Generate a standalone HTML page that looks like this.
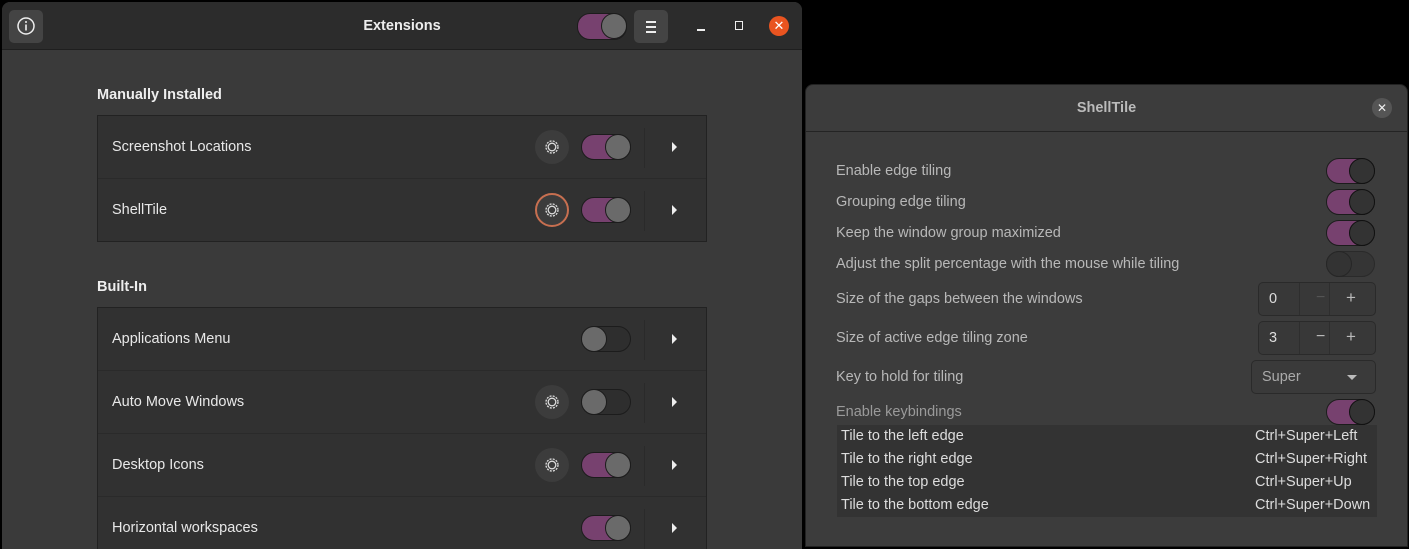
<!DOCTYPE html>
<html><head><meta charset="utf-8"><style>
*{box-sizing:border-box;margin:0;padding:0}
html{width:1409px;height:549px;overflow:hidden}
body{width:1409px;height:549px;background:#000;position:relative;overflow:hidden;font-family:"Liberation Sans",sans-serif;color:#eee;font-size:14px}
.a{position:absolute}
.win{left:2px;top:2px;width:800px;height:547px;background:#3a3a3a;border-radius:8px 8px 0 0;overflow:hidden}
.hdr{left:0;top:0;width:800px;height:48px;background:#2c2c2c;border-bottom:1px solid #1f1f1f}
.btn{background:#444;border-radius:5px}
.tg{width:50px;height:26px;border-radius:13px;border:1px solid #1c1c1c}
.tg.on{background:#77416f}
.tg.off{background:#2e2e2e}
.tg .k{position:absolute;top:0;width:24px;height:24px;border-radius:50%;background:#6a6a6a;border:1px solid #1c1c1c}
.tg.on .k{right:-1px;top:-1px;width:26px;height:26px}
.tg.off .k{left:-1px;top:-1px;width:26px;height:26px}
.list{left:97px;width:610px;background:#313131;border:1px solid #222;overflow:hidden}
.row{position:relative;height:63px;border-bottom:1px solid #2a2a2a}
.row:last-child{border-bottom:none}
.row .t{position:absolute;left:14px;top:23px;font-size:14.5px;color:#e8e8e8}
.row .sep{position:absolute;left:546px;top:12px;width:1px;height:40px;background:#2a2a2a}
.row .ar{position:absolute;left:574px;top:26px;width:0;height:0;border-left:5px solid #eee;border-top:5px solid transparent;border-bottom:5px solid transparent}
.gear{position:absolute;left:437px;top:14px;width:34px;height:34px;border-radius:50%;background:#3c3c3c;display:flex;align-items:center;justify-content:center}
.row .tg{position:absolute;left:483px;top:18px}
.sec{left:97px;font-weight:bold;font-size:14.5px;color:#eee}
.dlg{left:805px;top:84px;width:603px;height:463px;background:#3c3c3c;border-radius:8px 8px 0 0;border:1px solid #222}
.dh{left:0;top:0;width:601px;height:47px;border-bottom:1px solid #242424}
.lab{left:30px;font-size:14.5px;color:#b8b8b8}
.dlg .tg{left:520px;width:49px;height:26px;border-radius:13px}
.dlg .tg.on .k{right:-1px;top:-1px;width:26px;height:26px;background:#333;border:1px solid #111}
.dlg .tg.off .k{left:-1px;top:-1px;width:26px;height:26px;background:#333;border:1px solid #262626}
.dlg .tg.off{background:#353535;border-color:#2a2a2a}
.spin{left:452px;width:118px;height:34px;border:1px solid #2a2a2a;border-radius:5px;background:#383838}
.spin span{position:absolute;top:8px;font-size:14.5px}
.kb{left:31px;top:340px;width:540px;height:92px;background:#333}
.kb div{position:absolute;font-size:14.5px;color:#ddd}
</style></head><body>
<div class="a win">
 <div class="a hdr">
  <div class="a btn" style="left:7px;top:8px;width:34px;height:33px"></div>
  <svg class="a" style="left:13px;top:13px" width="22" height="22"><circle cx="11" cy="11" r="8" fill="none" stroke="#eee" stroke-width="1.5"/><rect x="10.2" y="9.5" width="1.6" height="6" fill="#eee"/><circle cx="11" cy="7" r="1" fill="#eee"/></svg>
  <div class="a" style="left:0;width:800px;top:16px;text-align:center;font-weight:bold;font-size:14.5px">Extensions</div>
  <div class="a tg on" style="left:575px;top:11px;width:50px;height:27px"><div class="k"></div></div>
  <div class="a btn" style="left:632px;top:8px;width:34px;height:33px"></div>
  <div class="a" style="left:644px;top:19px;width:10px;height:1.5px;background:#eee;box-shadow:0 5px 0 #eee,0 10px 0 #eee"></div>
  <div class="a" style="left:695px;top:27px;width:8px;height:1.5px;background:#eee"></div>
  <div class="a" style="left:733px;top:19px;width:8px;height:9px;border:1.5px solid #eee"></div>
  <div class="a" style="left:767px;top:14px;width:20px;height:20px;border-radius:50%;background:#e95420;color:#fff;font-size:13px;text-align:center;line-height:20px">✕</div>
 </div>
</div>
<div class="a sec" style="top:87px">Manually Installed</div>
<div class="a list" style="top:115px;height:127px">
 <div class="row"><div class="t">Screenshot Locations</div><div class="gear"><svg width="18" height="18" viewBox="0 0 18 18"><circle cx="9" cy="9" r="6" fill="none" stroke="#ddd" stroke-width="1.3" stroke-dasharray="2 1.2"/><circle cx="9" cy="9" r="3.8" fill="none" stroke="#ddd" stroke-width="1.3"/></svg></div><div class="tg on"><div class="k"></div></div><div class="sep"></div><div class="ar"></div></div>
 <div class="row"><div class="t">ShellTile</div><div class="gear" style="border:2px solid #c76f50"><svg width="18" height="18" viewBox="0 0 18 18"><circle cx="9" cy="9" r="6" fill="none" stroke="#ddd" stroke-width="1.3" stroke-dasharray="2 1.2"/><circle cx="9" cy="9" r="3.8" fill="none" stroke="#ddd" stroke-width="1.3"/></svg></div><div class="tg on"><div class="k"></div></div><div class="sep"></div><div class="ar"></div></div>
</div>
<div class="a sec" style="top:279px">Built-In</div>
<div class="a list" style="top:307px;height:242px;border-bottom:none">
 <div class="row"><div class="t">Applications Menu</div><div class="tg off"><div class="k"></div></div><div class="sep"></div><div class="ar"></div></div>
 <div class="row"><div class="t">Auto Move Windows</div><div class="gear"><svg width="18" height="18" viewBox="0 0 18 18"><circle cx="9" cy="9" r="6" fill="none" stroke="#ddd" stroke-width="1.3" stroke-dasharray="2 1.2"/><circle cx="9" cy="9" r="3.8" fill="none" stroke="#ddd" stroke-width="1.3"/></svg></div><div class="tg off"><div class="k"></div></div><div class="sep"></div><div class="ar"></div></div>
 <div class="row"><div class="t">Desktop Icons</div><div class="gear"><svg width="18" height="18" viewBox="0 0 18 18"><circle cx="9" cy="9" r="6" fill="none" stroke="#ddd" stroke-width="1.3" stroke-dasharray="2 1.2"/><circle cx="9" cy="9" r="3.8" fill="none" stroke="#ddd" stroke-width="1.3"/></svg></div><div class="tg on"><div class="k"></div></div><div class="sep"></div><div class="ar"></div></div>
 <div class="row"><div class="t">Horizontal workspaces</div><div class="tg on"><div class="k"></div></div><div class="sep"></div><div class="ar"></div></div>
</div>

<div class="a dlg">
 <div class="a dh"></div>
 <div class="a" style="left:0;width:601px;top:15px;text-align:center;font-weight:bold;font-size:14.5px;color:#bbb">ShellTile</div>
 <div class="a" style="left:566px;top:13px;width:20px;height:20px;border-radius:50%;background:#555;color:#eee;text-align:center;line-height:20px;font-size:12px">✕</div>
 <div class="a lab" style="top:78px">Enable edge tiling</div><div class="a tg on" style="top:73px"><div class="k"></div></div>
 <div class="a lab" style="top:109px">Grouping edge tiling</div><div class="a tg on" style="top:104px"><div class="k"></div></div>
 <div class="a lab" style="top:140px">Keep the window group maximized</div><div class="a tg on" style="top:135px"><div class="k"></div></div>
 <div class="a lab" style="top:171px">Adjust the split percentage with the mouse while tiling</div><div class="a tg off" style="top:166px"><div class="k"></div></div>
 <div class="a lab" style="top:206px">Size of the gaps between the windows</div>
 <div class="a spin" style="top:197px"><span style="left:10px;color:#ddd">0</span><div class="a" style="left:40px;top:0;width:1px;height:32px;background:#2e2e2e"></div><span style="left:57px;color:#555;font-size:16px;top:6px">−</span><div class="a" style="left:70px;top:0;width:1px;height:32px;background:#2e2e2e"></div><span style="left:87px;color:#bbb;font-size:17px;top:5px">+</span></div>
 <div class="a lab" style="top:245px">Size of active edge tiling zone</div>
 <div class="a spin" style="top:236px"><span style="left:10px;color:#ddd">3</span><div class="a" style="left:40px;top:0;width:1px;height:32px;background:#2e2e2e"></div><span style="left:57px;color:#bbb;font-size:16px;top:6px">−</span><div class="a" style="left:70px;top:0;width:1px;height:32px;background:#2e2e2e"></div><span style="left:87px;color:#bbb;font-size:17px;top:5px">+</span></div>
 <div class="a lab" style="top:284px">Key to hold for tiling</div>
 <div class="a" style="left:445px;top:275px;width:125px;height:34px;border:1px solid #2a2a2a;border-radius:5px;background:#3a3a3a"><span class="a" style="left:10px;top:8px;color:#aaa;font-size:14.5px">Super</span><div class="a" style="left:95px;top:14px;border-top:5px solid #bbb;border-left:5px solid transparent;border-right:5px solid transparent"></div></div>
 <div class="a lab" style="top:319px;color:#9a9a9a">Enable keybindings</div><div class="a tg on" style="top:314px"><div class="k"></div></div>
 <div class="a kb">
  <div style="left:4px;top:3px">Tile to the left edge</div><div style="left:418px;top:3px">Ctrl+Super+Left</div>
  <div style="left:4px;top:26px">Tile to the right edge</div><div style="left:418px;top:26px">Ctrl+Super+Right</div>
  <div style="left:4px;top:49px">Tile to the top edge</div><div style="left:418px;top:49px">Ctrl+Super+Up</div>
  <div style="left:4px;top:72px">Tile to the bottom edge</div><div style="left:418px;top:72px">Ctrl+Super+Down</div>
 </div>
</div>
</body></html>
